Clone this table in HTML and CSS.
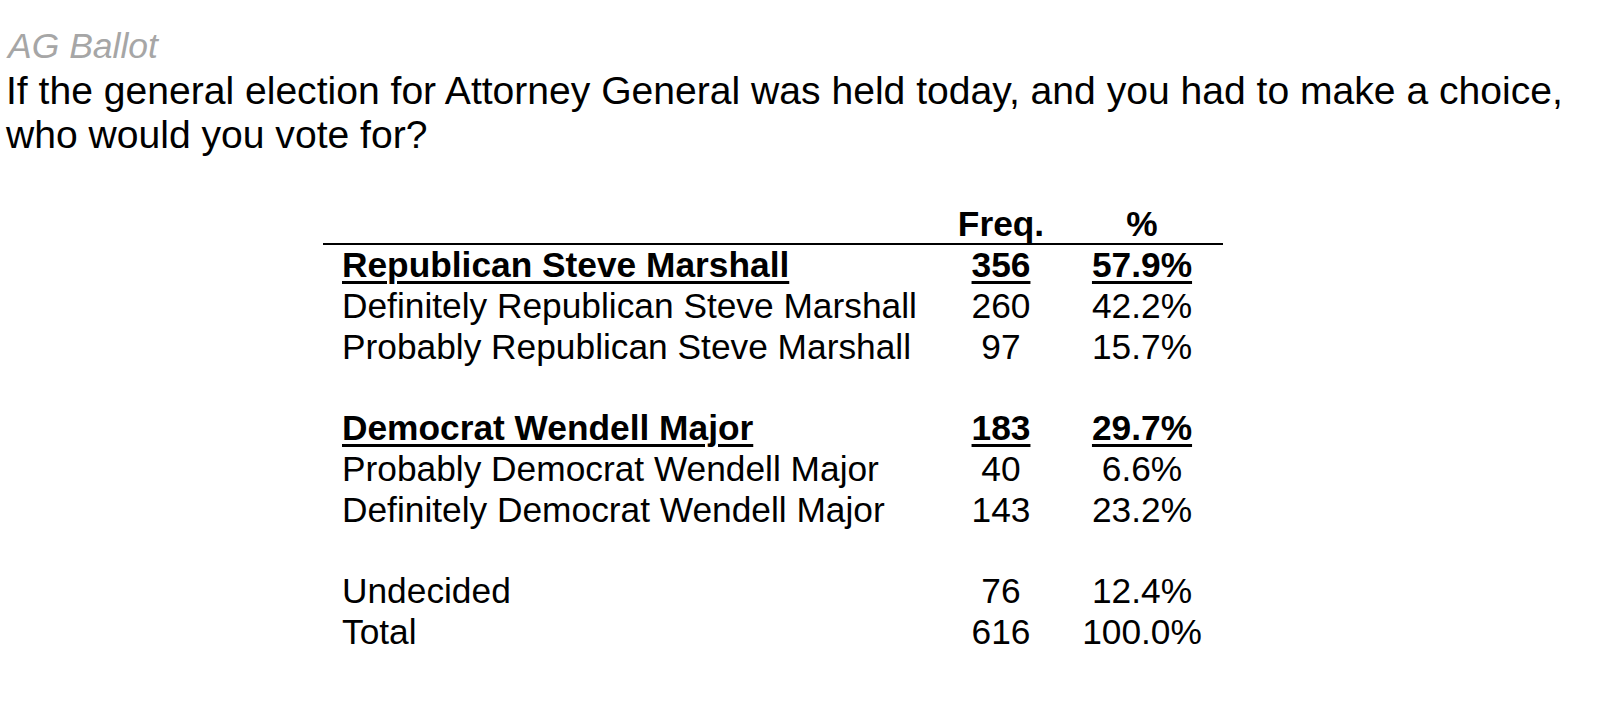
FILE: index.html
```html
<!DOCTYPE html>
<html lang="en">
<head>
<meta charset="utf-8">
<title>AG Ballot</title>
<link rel="stylesheet" href="styles.css">
</head>
<body>
<div class="page">
  <div class="title">AG Ballot</div>
  <div class="question">If the general election for Attorney General was held today, and you had to make a choice,<br>who would you vote for?</div>
  <table class="results">
    <colgroup>
      <col class="c-label">
      <col class="c-freq">
      <col class="c-pct">
    </colgroup>
    <thead>
      <tr>
        <th class="label"></th>
        <th class="num">Freq.</th>
        <th class="num pct">%</th>
      </tr>
    </thead>
    <tbody>
      <tr class="group"><td class="label"><span class="u">Republican Steve Marshall</span></td><td class="num"><span class="u">356</span></td><td class="num pct"><span class="u">57.9%</span></td></tr>
      <tr><td class="label">Definitely Republican Steve Marshall</td><td class="num">260</td><td class="num pct">42.2%</td></tr>
      <tr><td class="label">Probably Republican Steve Marshall</td><td class="num">97</td><td class="num pct">15.7%</td></tr>
      <tr class="blank"><td class="label"></td><td class="num"></td><td class="num pct"></td></tr>
      <tr class="group"><td class="label"><span class="u">Democrat Wendell Major</span></td><td class="num"><span class="u">183</span></td><td class="num pct"><span class="u">29.7%</span></td></tr>
      <tr><td class="label">Probably Democrat Wendell Major</td><td class="num">40</td><td class="num pct">6.6%</td></tr>
      <tr><td class="label">Definitely Democrat Wendell Major</td><td class="num">143</td><td class="num pct">23.2%</td></tr>
      <tr class="blank"><td class="label"></td><td class="num"></td><td class="num pct"></td></tr>
      <tr><td class="label">Undecided</td><td class="num">76</td><td class="num pct">12.4%</td></tr>
      <tr><td class="label">Total</td><td class="num">616</td><td class="num pct">100.0%</td></tr>
    </tbody>
  </table>
</div>
</body>
</html>
```
FILE: styles.css
```css
html, body {
  margin: 0;
  padding: 0;
  background: #ffffff;
}

body {
  font-family: "Liberation Sans", Arial, sans-serif;
  color: #000000;
}

.page {
  padding: 27px 0 0 6px;
}

.title {
  font-size: 35.5px;
  line-height: 38px;
  font-style: italic;
  color: #a6a6a6;
  margin-left: 2px;
}

.question {
  font-size: 39.1px;
  line-height: 44px;
  margin-top: 4px;
}

.results {
  margin-top: 47px;
  margin-left: 317px;
  border-collapse: collapse;
  table-layout: fixed;
  width: 900px;
  font-size: 35.3px;
}

.c-label { width: 613px; }
.c-freq { width: 130px; }
.c-pct { width: 157px; }

.results th,
.results td {
  padding: 0;
  height: 40.8px;
  line-height: 40.8px;
  white-space: nowrap;
}

.results thead th {
  font-weight: bold;
  height: 39px;
  line-height: 39px;
  border-bottom: 2px solid #000000;
}

.results .label {
  text-align: left;
  padding-left: 19px;
}

.results .num {
  text-align: center;
}

.results .pct {
  padding-right: 5px;
}

.results .group td {
  font-weight: bold;
}

.u {
  text-decoration: underline;
  text-decoration-thickness: 3px;
  text-underline-offset: 4px;
}
```
